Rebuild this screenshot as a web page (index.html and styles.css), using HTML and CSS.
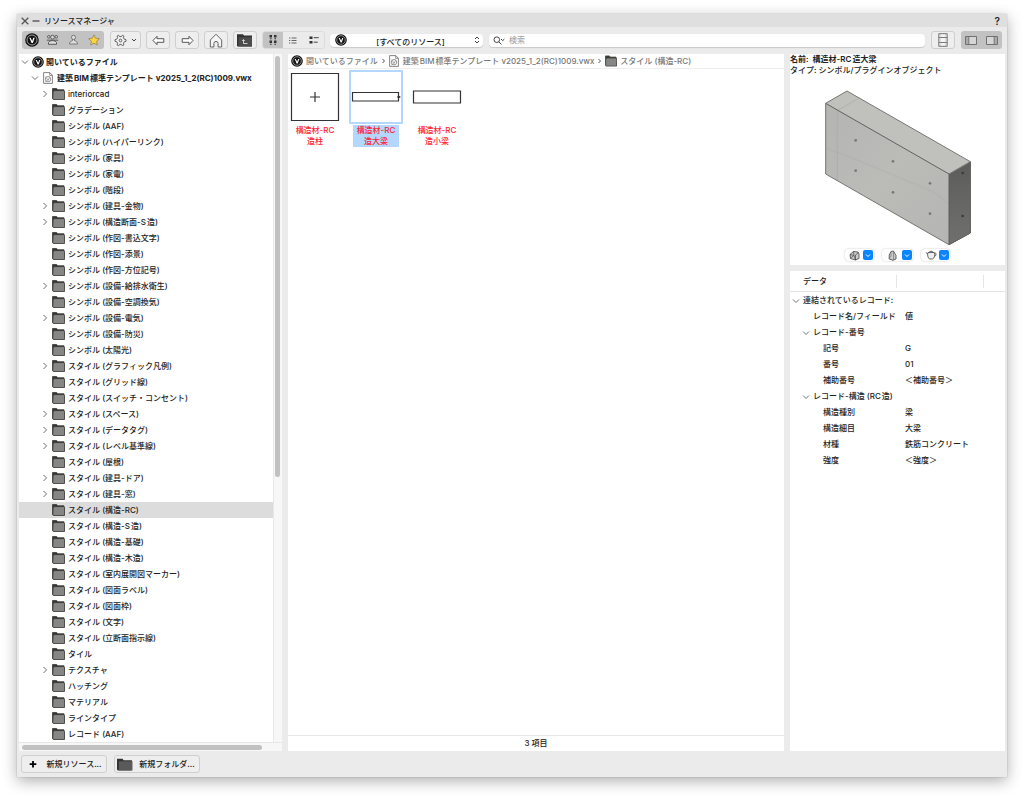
FILE: index.html
```html
<!DOCTYPE html>
<html lang="ja">
<head>
<meta charset="utf-8">
<meta name="viewport" content="width=device-width, initial-scale=1">
<title>リソースマネージャ</title>
<link rel="stylesheet" href="styles.css">
</head>
<body>
<svg class="defs" aria-hidden="true">
  <symbol id="folder" viewBox="0 0 13 12"><path d="M0.5 0.5h4.2l1 1.3h6.3v2H1.8v7.2H0.5z" fill="#3b3b38"/><path d="M2 3.2h10.6v8.3H1.5z" fill="#85857f"/><path d="M0.5 0.5h4.2l1 1.3h6.3v1.5h.5v8.2H1.2l-.7-1z" fill="none" stroke="#44443f" stroke-width=".9"/><path d="M2.3 10.5V3.5h9.7v7.2z" fill="#868686"/></symbol>
  <symbol id="folder-dark" viewBox="0 0 15 12"><path d="M0 .6h5.2l1 1.3H14V11a.6.6 0 0 1-.6.6H1.2A1.2 1.2 0 0 1 0 10.400z" fill="#333"/><path d="M1.8 3h12.700v8.500H1.800z" fill="#5a5a5a"/></symbol>
  <symbol id="logo" viewBox="0 0 14 14"><circle cx="7" cy="7" r="6.800" fill="#111"/><circle cx="7" cy="7" r="5" fill="none" stroke="#ddd" stroke-width=".7"/><path d="M4.300 4.700h1.300L7.200 8l1.100-3.300h1.400L7.900 10H6.600z" fill="#fff"/></symbol>
  <symbol id="doc" viewBox="0 0 10 12"><path d="M.6.600h6.200l2.600 2.600v8.200H.6z" fill="#fff" stroke="#666" stroke-width=".8"/><path d="M6.700.700v2.700h2.700" fill="none" stroke="#666" stroke-width=".7"/><circle cx="5" cy="7.200" r="2.700" fill="none" stroke="#777" stroke-width=".8"/><path d="M3.700 6.200l1.200 2.300 1.500-2.700M2.200 4.500l1 1M2.300 10l1.200-1" fill="none" stroke="#777" stroke-width=".7"/></symbol>
  <symbol id="right" viewBox="0 0 8 8"><path d="M2.500 1l3 3-3 3" fill="none" stroke="#707070" stroke-width="1"/></symbol>
  <symbol id="down" viewBox="0 0 8 8"><path d="M1 2.500l3 3 3-3" fill="none" stroke="#707070" stroke-width="1"/></symbol>
  <symbol id="crumb" viewBox="0 0 5 6"><path d="M1.500 1l2 2-2 2" fill="none" stroke="#555" stroke-width="1"/></symbol>
</svg>

<main class="window">
  <header class="titlebar">
    <button class="plain" aria-label="閉じる"><svg width="8" height="8" viewBox="0 0 8 8"><path d="M.7.700l6.600 6.600M7.300.700L.7 7.300" stroke="#555" stroke-width="1.300"/></svg></button>
    <button class="plain" aria-label="しまう"><svg width="8" height="8" viewBox="0 0 8 8"><path d="M0.500 4h7" stroke="#555" stroke-width="1.400"/></svg></button>
    <h1 class="title">リソースマネージャ</h1>
    <button class="plain help">?</button>
  </header>

  <div class="toolbar">
    <div class="group sources">
      <button class="plain" aria-label="Vectorworks ライブラリ"><svg width="14" height="14"><use href="#logo"/></svg></button>
      <button class="plain" aria-label="ワークグループ"><svg width="13" height="12" viewBox="0 0 13 12" fill="#ddd" stroke="#4b4b4b" stroke-width=".9"><circle cx="2.800" cy="2.800" r="1.300"/><circle cx="10.200" cy="2.800" r="1.300"/><path d="M.8 6.200h11.400"/><circle cx="6.500" cy="3.200" r="1.900"/><path d="M2.500 10.300V8.500C4 6 9 6 10.500 8.500v1.800z"/></svg></button>
      <button class="plain" aria-label="ユーザ"><svg width="11" height="12" viewBox="0 0 11 12" fill="#ddd" stroke="#666" stroke-width=".8"><path d="M4.500 5v1.600C2.300 7.200 1.500 8.200 1.500 10h8c0-1.800-.8-2.800-3-3.400V5"/><circle cx="5.500" cy="3.400" r="2.100"/></svg></button>
      <button class="plain" aria-label="お気に入り"><svg width="12" height="12" viewBox="0 0 12 12"><path d="M6 .8l1.600 3.400 3.700.5-2.700 2.600.7 3.700L6 9.200 2.700 11l.7-3.700L.7 4.700l3.700-.5z" fill="#ffd23c" stroke="#94835a" stroke-width=".8"/></svg></button>
    </div>
    <button class="tool gear" aria-label="設定"><svg width="13" height="13" viewBox="0 0 13 13" fill="none" stroke="#555" stroke-width=".9"><path d="M4.600 1.200l1 1.400h1.800l1-1.400 1.500.9-.4 1.700.8 1.400 1.700.5v1.600l-1.700.5-.8 1.400.4 1.700-1.500.9-1-1.400H5.600l-1 1.400-1.500-.9.400-1.700-.8-1.400L1 7.300V5.700l1.700-.5.8-1.400-.4-1.700z"/><circle cx="6.500" cy="6.500" r="1.300"/></svg><svg width="6" height="6" viewBox="0 0 6 6"><path d="M1 2l2 2 2-2" fill="none" stroke="#444"/></svg></button>
    <button class="tool" aria-label="戻る"><svg width="13" height="11" viewBox="0 0 13 11"><path d="M1 5.500l4-4.200v2.400h6.800v3.600H5v2.400z" fill="#fff" stroke="#444" stroke-width=".9"/></svg></button>
    <button class="tool" aria-label="進む"><svg width="13" height="11" viewBox="0 0 13 11"><path d="M12 5.500L8 1.300v2.400H1.200v3.600H8v2.400z" fill="#fff" stroke="#444" stroke-width=".9"/></svg></button>
    <button class="tool" aria-label="ホーム"><svg width="14" height="15" viewBox="0 0 14 15"><path d="M7 1.200L1.300 7v7h3.600v-3.500a2.100 2.100 0 0 1 4.200 0V14h3.600V7z" fill="#f5f5f5" stroke="#555" stroke-width=".9"/></svg></button>
    <button class="tool" aria-label="上の階層"><svg width="16" height="13" viewBox="0 0 16 13"><path d="M0 .3h6l1 1.300h8v11H.8L0 12z" fill="#333"/><path d="M1.500 3.200h13.500v9.300H1.500z" fill="#4c4c4c"/><path d="M6.500 6v3.500h4M5.200 7l1.300-1.500L7.800 7" fill="none" stroke="#ddd" stroke-width=".9"/></svg></button>
    <div class="group views">
      <button class="plain on" aria-label="アイコン表示"><svg width="8" height="10" viewBox="0 0 8 10" fill="#333"><path d="M.5 0h2.500v2.500H.5zM1 3.300h1.500v1H1zM5 0h2.500v2.500H5zM5.500 3.300H7v1H5.500zM.5 5.500h2.500V8H.5zM1 8.700h1.500v1H1zM5 5.500h2.500V8H5zM5.500 8.700H7v1H5.500z"/></svg></button>
      <button class="plain" aria-label="リスト表示"><svg width="8" height="7" viewBox="0 0 8 7"><path d="M0 1h1.300M2.500 1h5M0 3.500h1.300M2.500 3.500h5M0 6h1.300M2.500 6h5" stroke="#555" stroke-width=".9"/></svg></button>
      <button class="plain" aria-label="詳細表示"><svg width="10" height="8" viewBox="0 0 10 8"><path d="M.5.500h3v2.500h-3zM.5 5h3v2.500h-3z" fill="#333"/><path d="M4.700 1.700h5M4.700 6.200h4" stroke="#444"/></svg></button>
    </div>
    <div class="field filter">
      <svg width="12" height="12"><use href="#logo"/></svg>
      <select aria-label="リソースの種類"><option>[すべてのリソース]</option></select>
      <svg width="6" height="8" viewBox="0 0 6 8"><path d="M1 3l2-2 2 2M1 5l2 2 2-2" fill="none" stroke="#444"/></svg>
    </div>
    <div class="field search">
      <svg width="13" height="9" viewBox="0 0 13 9" fill="none" stroke="#444"><circle cx="3.800" cy="3.700" r="2.800"/><path d="M5.800 5.800l2.700 2.700M8 3l1.700 1.700L11.400 3"/></svg>
      <input type="text" placeholder="検索" aria-label="検索">
    </div>
    <button class="tool" aria-label="ファイル一覧"><svg width="10" height="14" viewBox="0 0 10 14" fill="#f5f5f5" stroke="#666" stroke-width=".9"><path d="M.8.700h8.400v12.600H.8z"/><path d="M.8 4.500h8.400M.8 9.500h8.400"/><path d="M2.200 1v12M7.800 1v12" stroke="#aaa" stroke-width=".5"/></svg></button>
    <div class="group panes">
      <button class="plain" aria-label="左パネル"><svg width="12" height="9" viewBox="0 0 12 9"><path d="M.5.500h11v8H.5z" fill="#d6d6d6" stroke="#666" stroke-width=".9"/><path d="M1 1h2.500v7H1z" fill="#aaa"/><path d="M3.800.500v8" stroke="#666" stroke-width=".9"/></svg></button>
      <button class="plain" aria-label="右パネル"><svg width="12" height="9" viewBox="0 0 12 9"><path d="M.5.500h11v8H.5z" fill="#d6d6d6" stroke="#666" stroke-width=".9"/><path d="M8.500 1H11v7H8.500z" fill="#aaa"/><path d="M8.200.500v8" stroke="#666" stroke-width=".9"/></svg></button>
    </div>
  </div>

  <div class="panels">
    <nav class="browser" aria-label="ファイル">
      <div class="tree-area">
      <ul class="tree">
        <li class="row root"><svg class="twist"><use href="#down"/></svg><svg class="i-logo"><use href="#logo"/></svg>開いているファイル</li>
        <li class="row file"><svg class="twist"><use href="#down"/></svg><svg class="i-doc"><use href="#doc"/></svg>建築BIM標準テンプレート v2025_1_2(RC)1009.vwx</li>
        <li class="row"><svg class="twist"><use href="#right"/></svg><svg class="i-folder"><use href="#folder"/></svg>interiorcad</li>
        <li class="row leaf"><svg class="i-folder"><use href="#folder"/></svg>グラデーション</li>
        <li class="row leaf"><svg class="i-folder"><use href="#folder"/></svg>シンボル (AAF)</li>
        <li class="row leaf"><svg class="i-folder"><use href="#folder"/></svg>シンボル (ハイパーリンク)</li>
        <li class="row leaf"><svg class="i-folder"><use href="#folder"/></svg>シンボル (家具)</li>
        <li class="row leaf"><svg class="i-folder"><use href="#folder"/></svg>シンボル (家電)</li>
        <li class="row leaf"><svg class="i-folder"><use href="#folder"/></svg>シンボル (階段)</li>
        <li class="row"><svg class="twist"><use href="#right"/></svg><svg class="i-folder"><use href="#folder"/></svg>シンボル (建具-金物)</li>
        <li class="row"><svg class="twist"><use href="#right"/></svg><svg class="i-folder"><use href="#folder"/></svg>シンボル (構造断面-S造)</li>
        <li class="row leaf"><svg class="i-folder"><use href="#folder"/></svg>シンボル (作図-書込文字)</li>
        <li class="row leaf"><svg class="i-folder"><use href="#folder"/></svg>シンボル (作図-添景)</li>
        <li class="row leaf"><svg class="i-folder"><use href="#folder"/></svg>シンボル (作図-方位記号)</li>
        <li class="row"><svg class="twist"><use href="#right"/></svg><svg class="i-folder"><use href="#folder"/></svg>シンボル (設備-給排水衛生)</li>
        <li class="row leaf"><svg class="i-folder"><use href="#folder"/></svg>シンボル (設備-空調換気)</li>
        <li class="row"><svg class="twist"><use href="#right"/></svg><svg class="i-folder"><use href="#folder"/></svg>シンボル (設備-電気)</li>
        <li class="row leaf"><svg class="i-folder"><use href="#folder"/></svg>シンボル (設備-防災)</li>
        <li class="row leaf"><svg class="i-folder"><use href="#folder"/></svg>シンボル (太陽光)</li>
        <li class="row"><svg class="twist"><use href="#right"/></svg><svg class="i-folder"><use href="#folder"/></svg>スタイル (グラフィック凡例)</li>
        <li class="row leaf"><svg class="i-folder"><use href="#folder"/></svg>スタイル (グリッド線)</li>
        <li class="row leaf"><svg class="i-folder"><use href="#folder"/></svg>スタイル (スイッチ・コンセント)</li>
        <li class="row"><svg class="twist"><use href="#right"/></svg><svg class="i-folder"><use href="#folder"/></svg>スタイル (スペース)</li>
        <li class="row"><svg class="twist"><use href="#right"/></svg><svg class="i-folder"><use href="#folder"/></svg>スタイル (データタグ)</li>
        <li class="row"><svg class="twist"><use href="#right"/></svg><svg class="i-folder"><use href="#folder"/></svg>スタイル (レベル基準線)</li>
        <li class="row leaf"><svg class="i-folder"><use href="#folder"/></svg>スタイル (屋根)</li>
        <li class="row"><svg class="twist"><use href="#right"/></svg><svg class="i-folder"><use href="#folder"/></svg>スタイル (建具-ドア)</li>
        <li class="row"><svg class="twist"><use href="#right"/></svg><svg class="i-folder"><use href="#folder"/></svg>スタイル (建具-窓)</li>
        <li class="row leaf selected"><svg class="i-folder"><use href="#folder"/></svg>スタイル (構造-RC)</li>
        <li class="row leaf"><svg class="i-folder"><use href="#folder"/></svg>スタイル (構造-S造)</li>
        <li class="row leaf"><svg class="i-folder"><use href="#folder"/></svg>スタイル (構造-基礎)</li>
        <li class="row leaf"><svg class="i-folder"><use href="#folder"/></svg>スタイル (構造-木造)</li>
        <li class="row leaf"><svg class="i-folder"><use href="#folder"/></svg>スタイル (室内展開図マーカー)</li>
        <li class="row leaf"><svg class="i-folder"><use href="#folder"/></svg>スタイル (図面ラベル)</li>
        <li class="row leaf"><svg class="i-folder"><use href="#folder"/></svg>スタイル (図面枠)</li>
        <li class="row leaf"><svg class="i-folder"><use href="#folder"/></svg>スタイル (文字)</li>
        <li class="row leaf"><svg class="i-folder"><use href="#folder"/></svg>スタイル (立断面指示線)</li>
        <li class="row leaf"><svg class="i-folder"><use href="#folder"/></svg>タイル</li>
        <li class="row"><svg class="twist"><use href="#right"/></svg><svg class="i-folder"><use href="#folder"/></svg>テクスチャ</li>
        <li class="row leaf"><svg class="i-folder"><use href="#folder"/></svg>ハッチング</li>
        <li class="row leaf"><svg class="i-folder"><use href="#folder"/></svg>マテリアル</li>
        <li class="row leaf"><svg class="i-folder"><use href="#folder"/></svg>ラインタイプ</li>
        <li class="row leaf"><svg class="i-folder"><use href="#folder"/></svg>レコード (AAF)</li>
      </ul>
      <div class="vtrack"><div class="vthumb"></div></div>
      </div>
      <div class="htrack"><div class="hthumb"></div></div>
    </nav>

    <section class="content">
      <div class="crumbs">
        <svg class="i-logo"><use href="#logo"/></svg><a href="#">開いているファイル</a>
        <svg class="i-sep"><use href="#crumb"/></svg>
        <svg class="i-doc"><use href="#doc"/></svg><a href="#">建築BIM標準テンプレート v2025_1_2(RC)1009.vwx</a>
        <svg class="i-sep"><use href="#crumb"/></svg>
        <svg class="i-crumb-folder"><use href="#folder"/></svg><a href="#">スタイル (構造-RC)</a>
      </div>
      <div class="grid">
        <figure class="item">
          <svg class="thumb" viewBox="0 0 54 54"><path d="M3.500 3.500h47v47h-47zM27 22v10M22 27h10" fill="none" stroke="#333" stroke-width="1.200"/></svg>
          <figcaption>構造材-RC<br>造柱</figcaption>
        </figure>
        <figure class="item chosen">
          <svg class="thumb" viewBox="0 0 54 54"><path d="M1 1h52v52H1z" fill="#fff" stroke="#b3d7ff" stroke-width="2"/><path d="M3.500 22.500h46v8.500h-46zM48 27h3.500" fill="none" stroke="#333" stroke-width="1.200"/><circle cx="50" cy="27" r="1" fill="#333"/></svg>
          <figcaption>構造材-RC<br>造大梁</figcaption>
        </figure>
        <figure class="item">
          <svg class="thumb" viewBox="0 0 54 54"><path d="M3.500 21h47v12h-47z" fill="none" stroke="#333" stroke-width="1.200"/></svg>
          <figcaption>構造材-RC<br>造小梁</figcaption>
        </figure>
      </div>
      <div class="status">3 項目</div>
    </section>

    <aside class="details">
      <section class="preview">
        <h2 class="name">名前:&nbsp; 構造材-RC造大梁</h2>
        <p class="kind">タイプ: シンボル/プラグインオブジェクト</p>
        <svg class="model" viewBox="129 27 450 480" role="img" aria-label="構造材-RC造大梁">
          <defs>
            <linearGradient id="face" x1="0" y1="0" x2="1" y2="1"><stop offset="0" stop-color="#b4b5b3"/><stop offset=".5" stop-color="#bbbbb8"/><stop offset="1" stop-color="#b5b5b3"/></linearGradient>
            <linearGradient id="side" x1="0" y1="0" x2="0" y2="1"><stop offset="0" stop-color="#5c5c5a"/><stop offset="1" stop-color="#70706e"/></linearGradient>
          </defs>
          <path d="M137 70L201 33 571 245 507 282z" fill="#c0c1bd"/>
          <path d="M137 70L507 282V494L137 282z" fill="url(#face)"/>
          <path d="M507 282L571 245V459L507 494z" fill="url(#side)"/>
          <path d="M172 90V302M172 92l65-38" fill="none" stroke="#a5a6a4" stroke-width="4" opacity=".4"/>
          <path d="M137 205C230 235 300 270 400 310S470 350 507 372" fill="none" stroke="#a5a6a4" stroke-width="5" opacity=".2"/>
          <path d="M137 70L201 33 571 245V459L507 494 137 282zM507 282L571 245" fill="none" stroke="#767674" stroke-width="3"/>
          <path d="M137 70L507 282V494M571 245V459L507 494" fill="none" stroke="#5e5e5c" stroke-width="3"/>
          <g fill="#777775"><circle cx="227" cy="181" r="4"/><circle cx="227" cy="272" r="4"/><circle cx="339" cy="244" r="4"/><circle cx="339" cy="337" r="4"/><circle cx="450" cy="310" r="4"/><circle cx="450" cy="401" r="4"/></g>
          <g fill="#3a3a39"><circle cx="548" cy="279" r="4"/><circle cx="548" cy="408" r="4"/></g>
        </svg>
        <div class="view-buttons">
          <button class="pop" aria-label="ビュー"><svg width="11" height="11" viewBox="0 0 11 11"><path d="M1 4.500L4.500 1.500l4.500.5 1 2v4.500L6.500 10 1.500 8.500z" fill="#ccc" stroke="#444" stroke-width=".8"/><path d="M1 4.500l4 1 1.500 4.500V5l3-2.500M5 5.500L4.500 1.500M1.500 8l3-2" fill="none" stroke="#444" stroke-width=".7"/></svg><span class="drop"><svg width="6" height="5" viewBox="0 0 6 5"><path d="M1 1.500l2 2 2-2" fill="none" stroke="#fff"/></svg></span></button>
          <button class="pop wide" aria-label="レンダリング"><svg width="9" height="11" viewBox="0 0 9 11"><path d="M3 1.500L5.500 1 8 5.500V9L5 10.300 1.200 9V5z" fill="#ccc" stroke="#444" stroke-width=".8"/><path d="M3 1.500v4.500L1.200 8.500M5.500 1v9" fill="none" stroke="#666" stroke-width=".6"/></svg><span class="drop"><svg width="6" height="5" viewBox="0 0 6 5"><path d="M1 1.500l2 2 2-2" fill="none" stroke="#fff"/></svg></span></button>
          <button class="pop" aria-label="表示品質"><svg width="12" height="10" viewBox="0 0 12 10"><path d="M3 2.500C2 5 3 8 4.500 9h3.200C9.500 8 10.300 5 9.300 2.500zM3 4L.8 2.500M9.600 3c2-.5 2 2.500 0 3.500M4 2.300c1-1 3.500-1 4.500 0M6.200 1.500V.8" fill="#eee" stroke="#444" stroke-width=".8"/></svg><span class="drop"><svg width="6" height="5" viewBox="0 0 6 5"><path d="M1 1.500l2 2 2-2" fill="none" stroke="#fff"/></svg></span></button>
        </div>
      </section>
      <section class="data">
        <table class="records">
          <colgroup><col class="c-name"><col class="c-value"><col></colgroup>
          <thead><tr><th>データ</th><th></th><th></th></tr></thead>
          <tbody>
            <tr><td class="d0" colspan="3"><svg class="twist"><use href="#down"/></svg>連結されているレコード:</td></tr>
            <tr><td class="d1">レコード名/フィールド</td><td colspan="2">値</td></tr>
            <tr><td class="g1" colspan="3"><svg class="twist"><use href="#down"/></svg>レコード-番号</td></tr>
            <tr><td class="d2">記号</td><td colspan="2">G</td></tr>
            <tr><td class="d2">番号</td><td colspan="2">01</td></tr>
            <tr><td class="d2">補助番号</td><td colspan="2">＜補助番号＞</td></tr>
            <tr><td class="g1" colspan="3"><svg class="twist"><use href="#down"/></svg>レコード-構造 (RC造)</td></tr>
            <tr><td class="d2">構造種別</td><td colspan="2">梁</td></tr>
            <tr><td class="d2">構造細目</td><td colspan="2">大梁</td></tr>
            <tr><td class="d2">材種</td><td colspan="2">鉄筋コンクリート</td></tr>
            <tr><td class="d2">強度</td><td colspan="2">＜強度＞</td></tr>
          </tbody>
        </table>
      </section>
    </aside>
  </div>

  <footer class="actions">
    <button class="tool action"><svg width="16" height="12" viewBox="0 0 16 12"><path d="M8 3v6.500M4.700 6.200h6.600" stroke="#000" stroke-width="1.800"/></svg>新規リソース...</button>
    <button class="tool action"><svg width="16" height="13"><use href="#folder-dark"/></svg>新規フォルダ...</button>
  </footer>
</main>
</body>
</html>
```

FILE: styles.css
```css
* { box-sizing: border-box; }

body {
  margin: 0;
  padding: 14px 17px 21px;
  min-height: 100vh;
  display: flex;
  background: #fff;
  color: #222;
  font: 500 8px/16px Inter, "Noto Sans CJK JP", sans-serif;
  text-autospace: normal;
}

button, input, select { font: inherit; color: inherit; margin: 0; padding: 0; border: 0; background: none; }
h1, h2, p, ul, figure { margin: 0; padding: 0; }
svg { flex: none; display: block; }
.defs { position: absolute; width: 0; height: 0; }
.plain { display: flex; align-items: center; justify-content: center; }

.window {
  flex: 1;
  min-width: 0;
  display: flex;
  flex-direction: column;
  background: #ebebeb;
  box-shadow: 0 0 1px rgba(0, 0, 0, .3), 0 4px 14px rgba(0, 0, 0, .32);
}

.titlebar { display: flex; align-items: center; gap: 3px; height: 13px; padding: 0 7px 0 4px; background: #dfdfdf; }
.title { flex: 1; padding-left: 1px; font-size: 8px; font-weight: 500; }
.help { font-size: 10px; font-weight: 600; }

.toolbar { display: flex; align-items: center; gap: 5px; height: 26px; padding: 0 5px; margin-bottom: 1px; }
.group { display: flex; height: 18px; border-radius: 3px; background: #c2c2c2; }
.group button { flex: 1; }
.sources { width: 82px; margin-right: 1px; }
.views { width: 63px; background: #ebebeb; border: 1px solid #dcdcdc; }
.views .on { background: #c2c2c2; border-radius: 2px 0 0 2px; }
.panes { width: 41px; margin-left: 1px; }
.tool {
  display: flex;
  align-items: center;
  justify-content: center;
  width: 24px;
  height: 18px;
  border: 1px solid #cfcfcf;
  border-radius: 3px;
  background: #eee;
}
.gear { width: 31px; gap: 4px; }
.field { display: flex; align-items: center; height: 13px; border-radius: 4px; background: #fff; box-shadow: 0 1px 1px rgba(0, 0, 0, .15); }
.filter { width: 153px; padding: 0 3px 0 5px; }
.filter select { flex: 1; appearance: none; text-align: center; text-align-last: center; height: 13px; outline: 0; }
.search { flex: 1; gap: 3px; margin: 0 1px; padding-left: 4px; }
.search input { flex: 1; min-width: 0; height: 13px; outline: 0; }
.search input::placeholder { color: #aaa; }

.panels { flex: 1; display: grid; grid-template-columns: 263px 1fr 215px; gap: 6px; padding: 0 2px; }

.browser { display: flex; flex-direction: column; background: #f7f7f7; }
.tree-area { flex: 1; display: flex; }
.tree { flex: 1; list-style: none; background: #fff; border-right: 1px solid #e8e8e8; }
.vtrack { width: 8px; padding: 2px 2px 0 1px; }
.vthumb { width: 5px; height: 421px; border-radius: 3px; background: #c1c1c1; }
.htrack { height: 9px; padding: 2px 20px 0 3px; border-top: 1px solid #e8e8e8; }
.hthumb { height: 5px; border-radius: 3px; background: #c1c1c1; }

.row { display: flex; align-items: center; height: 16px; padding-left: 22px; white-space: nowrap; }
.root { padding-left: 2px; font-weight: 600; }
.file { padding-left: 12px; font-weight: 700; }
.leaf { padding-left: 33px; }
.selected { background: #dcdcdc; }
.twist { width: 8px; height: 8px; }
.row .twist { margin-right: 3px; }
.i-folder { width: 13px; height: 12px; margin-right: 3px; }
.i-logo { width: 12px; height: 12px; margin-right: 3px; }
.i-doc { width: 10px; height: 12px; margin-right: 4px; }
.row .i-logo { margin-right: 2px; }
.row .i-doc { margin-left: 1px; }

.content { display: flex; flex-direction: column; min-width: 0; background: #fff; }
.crumbs { display: flex; align-items: center; height: 15px; padding-left: 3px; border-bottom: 1px solid #eee; white-space: nowrap; overflow: hidden; }
.crumbs a { color: #777; text-decoration: none; }
.i-sep { width: 5px; height: 6px; margin: 0 3px; }
.i-crumb-folder { width: 12px; height: 12px; margin-right: 3px; }
.grid { flex: 1; display: flex; align-items: flex-start; gap: 7px; padding: 1px 0 0; }
.item { width: 54px; color: #ff2030; text-align: center; font-size: 8px; line-height: 11px; }
.thumb { width: 54px; height: 54px; }
.item figcaption { width: 46px; margin: 1px auto 0; }
.chosen figcaption { background: #b3d7ff; }
.status { height: 16px; border-top: 1px solid #e6e6e6; text-align: center; line-height: 15px; }

.details { display: flex; flex-direction: column; gap: 6px; min-width: 0; }
.preview { display: flex; flex-direction: column; height: 211px; background: #fff; }
.name { font-size: 8px; font-weight: 600; line-height: 11px; }
.kind { line-height: 11px; }
.model { width: 150px; height: 160px; margin: 13px auto 0; }
.view-buttons { display: flex; justify-content: center; gap: 8px; padding-right: 1px; }
.pop { display: flex; align-items: center; justify-content: space-between; width: 29px; height: 12px; padding: 0 1px 0 4px; border-radius: 4px; background: #fff; box-shadow: 0 0 2px rgba(0, 0, 0, .25); }
.wide { width: 31px; padding-left: 6px; }
.drop { display: flex; align-items: center; justify-content: center; width: 10px; height: 10px; border-radius: 2px; background: #0a84ff; }

.data { flex: 1; background: #fff; }
.records { width: 100%; table-layout: fixed; border-collapse: separate; border-spacing: 0; }
.c-name { width: 107px; }
.c-value { width: 87px; }
.records th { height: 21px; padding: 0 0 0 13px; border-bottom: 1px solid #e4e4e4; text-align: left; font-weight: 500; background: linear-gradient(#e4e4e4, #e4e4e4) right center / 1px 13px no-repeat; }
.records th:last-child { background: none; }
.records td { height: 16px; padding: 0 0 0 8px; white-space: nowrap; }
.records .twist { display: inline-block; vertical-align: middle; margin-right: 3px; }
.records .d0 { padding-left: 2px; }
.records .g1 { padding-left: 12px; }
.records .d1 { padding-left: 23px; }
.records .d2 { padding-left: 33px; }

.actions { display: flex; align-items: center; gap: 7px; height: 26px; padding: 0 4px; }
.action { width: 86px; gap: 6px; padding-right: 2px; font-weight: 500; }
```
